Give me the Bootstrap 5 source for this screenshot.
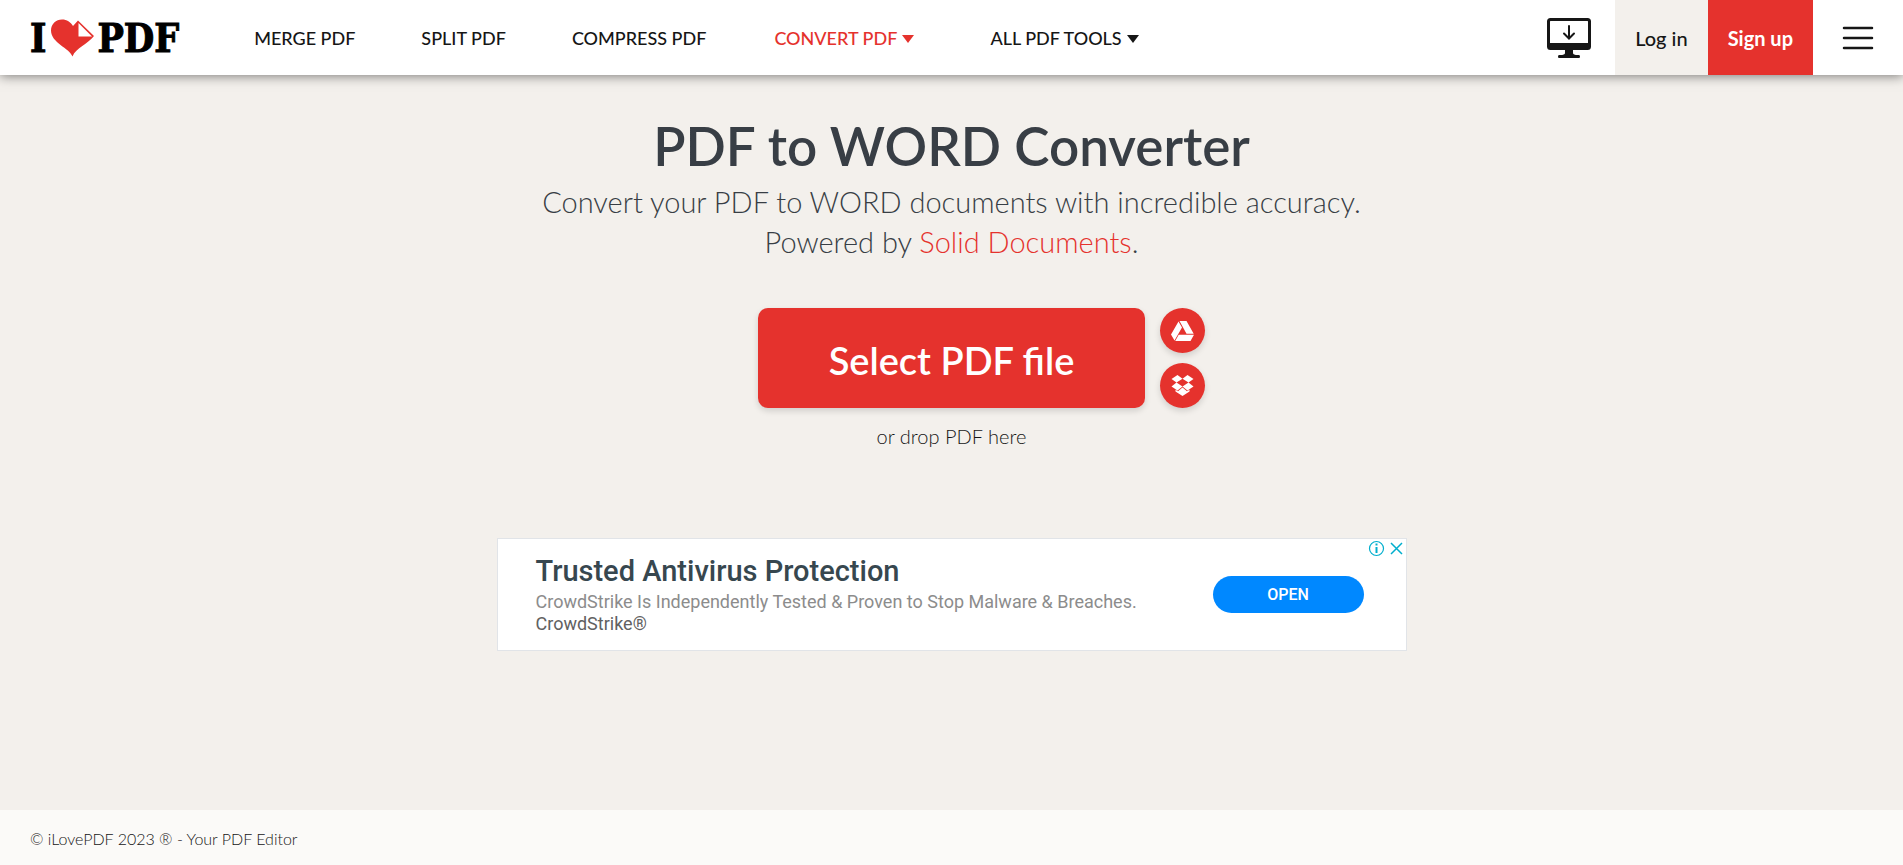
<!DOCTYPE html>
<html lang="en">
<head>
<meta charset="utf-8">
<meta name="viewport" content="width=device-width, initial-scale=1">
<title>PDF to WORD Converter</title>
<link href="https://cdn.jsdelivr.net/npm/bootstrap@5.3.0/dist/css/bootstrap.min.css" rel="stylesheet">
<style>
  :root { --brand: #e5322d; --page: #f3f0ec; --ink: #161616; --slate: #383e45; }
  body { font-family: Lato, "Open Sans", sans-serif; background: var(--page); color: var(--slate); }
  .site-head { height: 75px; background: #fff; box-shadow: 0 1px 11px rgba(0,0,0,.5); }
  .logo { font-family: "DejaVu Serif Condensed", "DejaVu Serif", serif; font-weight: 700; font-size: 39px; line-height: 40px; color: #000; -webkit-text-stroke: 1px #000; padding-left: 30px; margin-right: 42px; }
  .logo-heart { width: 44px; height: 38px; margin: 0 3px 0 4px; }
  .main-link { font-size: 18px; line-height: 27px; font-weight: 500; color: var(--ink); padding: 2px 33px 0; white-space: nowrap; }
  .main-link.has-menu { padding-left: 35px; }
  .main-link.current { color: var(--brand); margin-right: 8px; }
  .main-link svg { width: 12px; height: 8px; margin-left: 5px; }
  .head-btn { font-size: 20px; font-weight: 500; padding: 0 20px; color: var(--ink); white-space: nowrap; }
  .login { background: var(--page); }
  .signup { background: var(--brand); color: #fff; font-weight: 700; }
  .icon-btn { background: none; border: 0; padding: 0; }
  main { padding-top: 39px; }
  h1 { font-size: 53px; line-height: 64px; font-weight: 600; margin: 0; }
  .subtitle { font-size: 29px; line-height: 40px; font-weight: 300; margin: 4px 0 46px; }
  .subtitle a { color: var(--brand); }
  .pick { width: 387px; height: 100px; border-radius: 10px; background: var(--brand); color: #fff; border: 0; font-size: 38px; font-weight: 600; padding: 4px 0 0; box-shadow: 0 3px 6px rgba(0,0,0,.14); }
  .sources { left: 100%; top: 0; margin-left: 15px; gap: 10px; }
  .source { width: 45px; height: 45px; border: 0; padding: 0; border-radius: 50%; background: var(--brand); box-shadow: 0 3px 6px rgba(0,0,0,.14); }
  .drop-hint { font-size: 20px; line-height: 28px; font-weight: 300; color: var(--ink); margin: 14px 0 0; }
  .promo { max-width: 910px; height: 113px; margin-top: 88px; border: 1px solid #e1e4e8; background: #fff; font-family: Roboto, sans-serif; padding: 0 42px 0 38px; }
  .promo h2 { font-size: 29px; line-height: 32px; font-weight: 500; color: #37474f; margin: 0 0 4px; }
  .promo p { font-size: 18px; line-height: 22px; color: #8c8c8c; margin: 0; }
  .promo p.advertiser { color: #616161; }
  .promo-open { width: 151px; height: 37px; border: 0; border-radius: 19px; background: #0088ff; color: #fff; font-size: 16px; font-weight: 500; }
  .promo-tools { top: 1px; right: 1px; gap: 3px; }
  .site-foot { height: 55px; background: #fbfaf8; font-size: 16px; font-weight: 300; color: var(--ink); padding: 2px 30px 0; }
</style>
</head>
<body class="d-flex flex-column min-vh-100">
<header class="site-head d-flex align-items-stretch position-relative">
  <a href="#" class="logo d-flex align-items-center text-decoration-none" aria-label="I love PDF">
    <span>I</span>
    <svg class="logo-heart" viewBox="0 0 44 38"><path fill="#e5322d" d="M22.500 37.500C19.500 29 1 24 1 11.500 1 5 6 .5 12 .5c5 0 8.500 2.500 11 6.500L28 1.500l16 15.500C38 25 26 28.500 22.500 37.500Z"/><path fill="#fff" d="M28.500 4v13.500H42Z"/></svg>
    <span>PDF</span>
  </a>
  <nav class="d-flex align-items-center" aria-label="Main">
    <a class="main-link text-decoration-none" href="#">MERGE PDF</a>
    <a class="main-link text-decoration-none" href="#">SPLIT PDF</a>
    <a class="main-link text-decoration-none" href="#">COMPRESS PDF</a>
    <a class="main-link has-menu current text-decoration-none d-flex align-items-center" href="#">CONVERT PDF<svg viewBox="0 0 12 8"><path fill="currentColor" d="M0 0h12L6 8Z"/></svg></a>
    <a class="main-link has-menu text-decoration-none d-flex align-items-center" href="#">ALL PDF TOOLS<svg viewBox="0 0 12 8"><path fill="currentColor" d="M0 0h12L6 8Z"/></svg></a>
  </nav>
  <div class="d-flex align-items-stretch ms-auto">
    <button class="icon-btn me-4" aria-label="Desktop app"><svg width="44" height="40" viewBox="0 0 44 40"><rect x="1.500" y="1.500" width="41" height="29" rx="2" fill="none" stroke="#161616" stroke-width="3"/><path fill="#161616" d="M1 25h42v6H1zM18 31h8v4q0 2 5 2h1q1 0 1 1.500T32 40H12q-1 0-1-1.500T12 37h1q5 0 5-2Z"/><path fill="none" stroke="#161616" stroke-width="2" stroke-linecap="round" d="M22 8v12M17 15.500l5 5 5-5"/></svg></button>
    <a href="#" class="head-btn login d-flex align-items-center text-decoration-none">Log in</a>
    <a href="#" class="head-btn signup d-flex align-items-center text-decoration-none">Sign up</a>
    <button class="icon-btn px-4" aria-label="Menu"><svg width="42" height="26" viewBox="0 0 42 26"><path stroke="#161616" stroke-width="2.500" stroke-linecap="round" d="M7 3h28M7 13h28M7 23h28"/></svg></button>
  </div>
</header>
<main class="container-fluid flex-grow-1 d-flex flex-column align-items-center text-center">
  <h1>PDF to WORD Converter</h1>
  <p class="subtitle">Convert your PDF to WORD documents with incredible accuracy.<br>Powered by <a href="#" class="text-decoration-none">Solid Documents</a>.</p>
  <div class="position-relative">
    <button class="pick">Select PDF file</button>
    <div class="sources position-absolute d-flex flex-column">
      <button class="source d-flex align-items-center justify-content-center" aria-label="Google Drive"><svg width="23" height="20" viewBox="0 0 23 20"><path fill="#fff" d="M7.500.5 0 13.500l3.500 6L11 6.500ZM8.500 0h7l7.200 12.700h-7.200ZM7.700 13.700H23l-3.500 6.300H4.200Z"/></svg></button>
      <button class="source d-flex align-items-center justify-content-center" aria-label="Dropbox"><svg width="23" height="21" viewBox="0 0 23 21"><path fill="#fff" d="M6.500 0l5 3.700L5.500 7.500.5 3.900ZM16.500 0l6 3.900-5 3.600-6-3.800ZM5.500 7.500l6 3.900-5 4-6-4ZM17.500 7.500l5 3.900-6 4-5-4ZM11.500 12.500l4.500 3.800 2.500-1.500v1.800L11.500 21l-7-4.400v-1.800L7 16.300Z"/></svg></button>
    </div>
  </div>
  <p class="drop-hint">or drop PDF here</p>
  <section class="promo w-100 position-relative d-flex align-items-center justify-content-between text-start" aria-label="Advertisement">
    <div>
      <h2>Trusted Antivirus Protection</h2>
      <p>CrowdStrike Is Independently Tested &amp; Proven to Stop Malware &amp; Breaches.</p>
      <p class="advertiser">CrowdStrike®</p>
    </div>
    <button class="promo-open">OPEN</button>
    <div class="promo-tools position-absolute d-flex">
      <button class="icon-btn d-flex" aria-label="Ad information"><svg width="17" height="17" viewBox="0 0 17 17"><circle cx="8.500" cy="8.500" r="7" fill="none" stroke="#00aecd" stroke-width="1.200"/><path stroke="#00aecd" stroke-width="2" d="M8.500 3.500v2M8.500 7v6"/></svg></button>
      <button class="icon-btn d-flex" aria-label="Close ad"><svg width="17" height="17" viewBox="0 0 17 17"><path stroke="#00aecd" stroke-width="1.500" d="M3 3l11 11M14 3L3 14"/></svg></button>
    </div>
  </section>
</main>
<footer class="site-foot d-flex align-items-center">© iLovePDF 2023 ® - Your PDF Editor</footer>
<script src="https://cdn.jsdelivr.net/npm/bootstrap@5.3.0/dist/js/bootstrap.bundle.min.js"></script>
</body>
</html>
